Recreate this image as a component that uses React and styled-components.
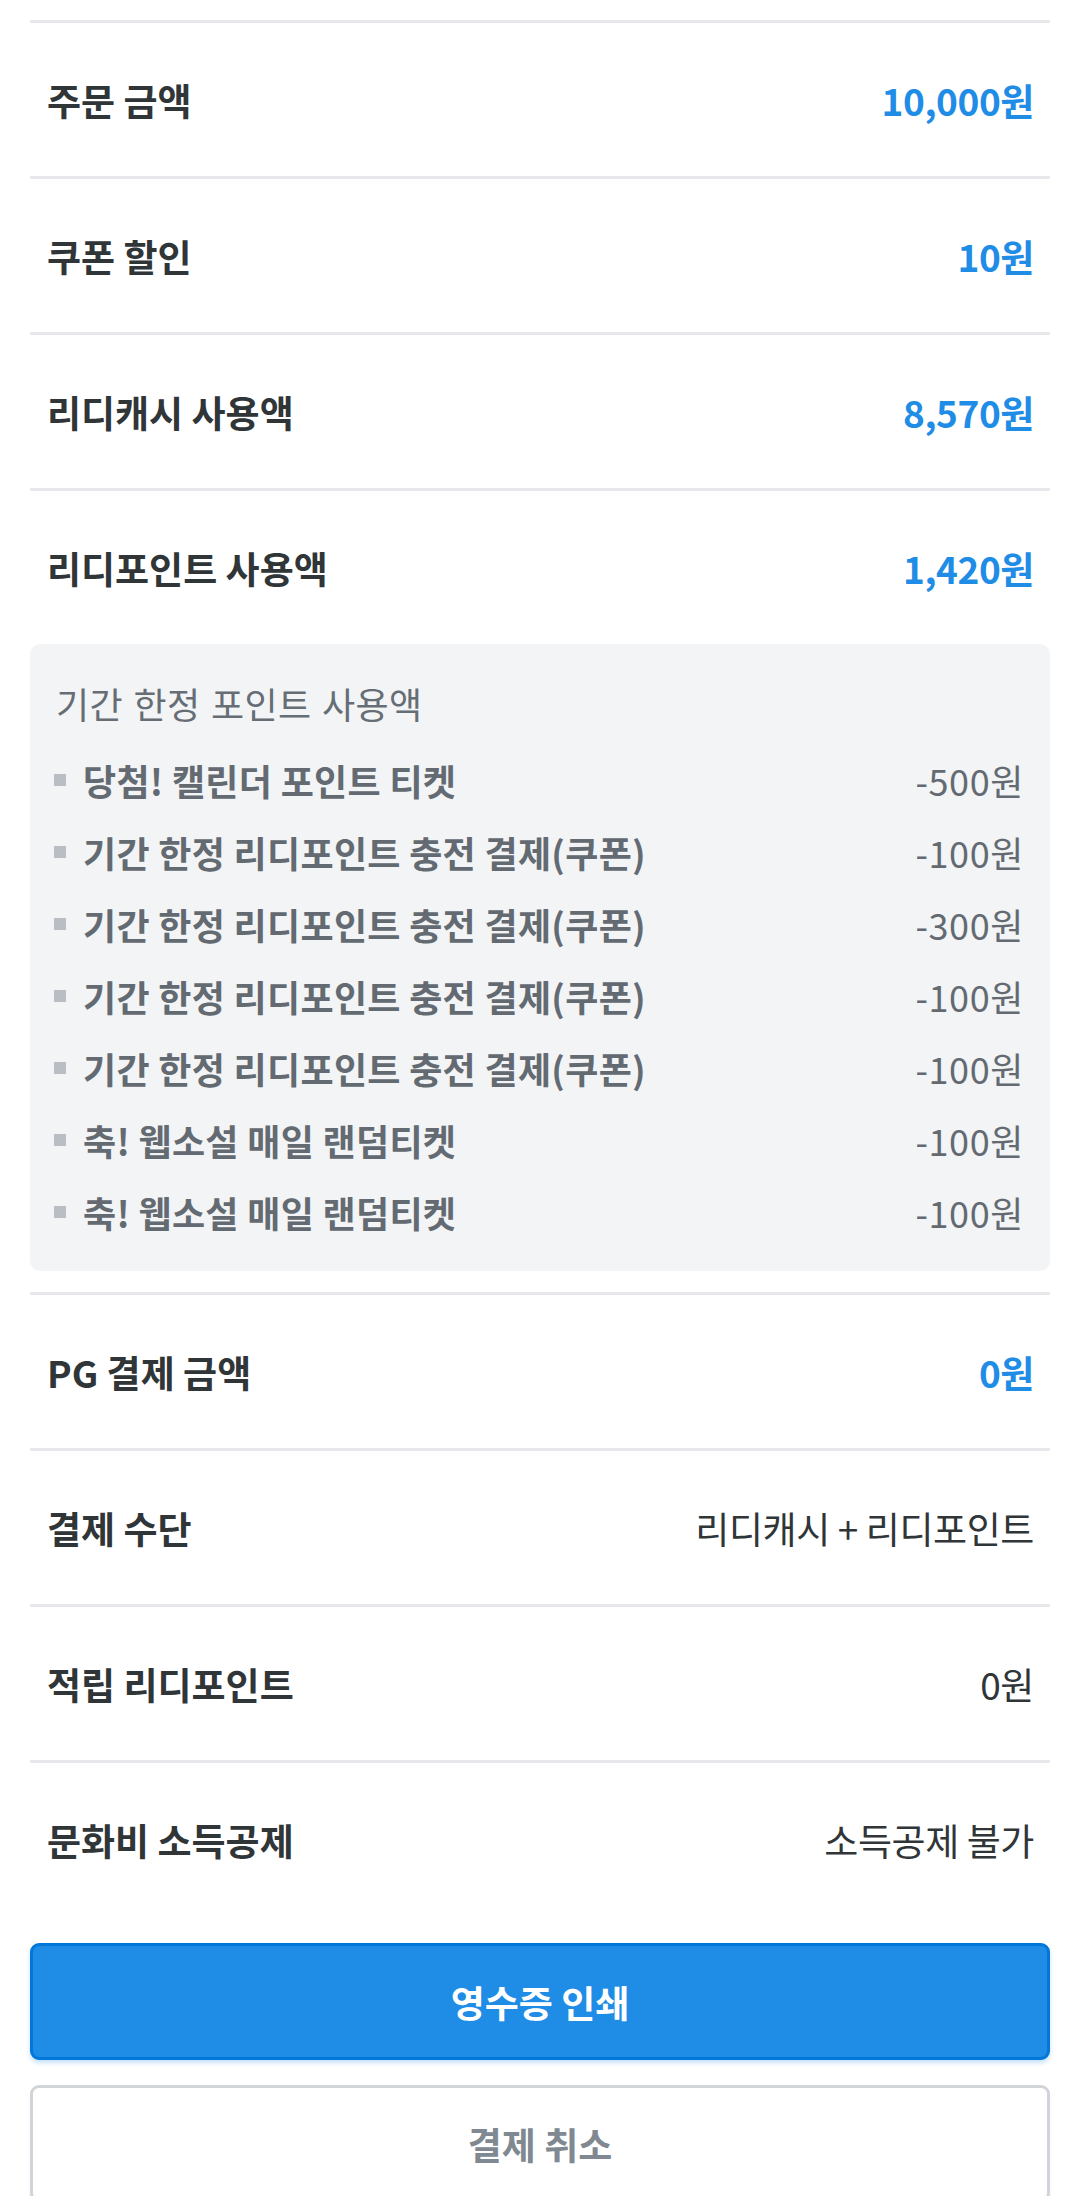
import React from "react";
import styled, { createGlobalStyle } from "styled-components";

const GlobalStyle = createGlobalStyle`
  html, body {
    margin: 0;
    padding: 0;
    background: #ffffff;
  }
  body {
    font-family: "Noto Sans CJK KR", "Noto Sans", sans-serif;
    -webkit-font-smoothing: antialiased;
  }
  * { box-sizing: border-box; }
`;

const Page = styled.div`
  width: 1080px;
  padding: 20px 30px 0;
  overflow: hidden;
  height: 2196px;
`;

const Row = styled.div`
  display: flex;
  align-items: center;
  justify-content: space-between;
  height: 156px;
  padding: 0 16px 0 17px;
  border-top: 3px solid #e6e8eb;
`;

const Label = styled.span`
  font-size: 37px;
  font-weight: 700;
  color: #303538;
  letter-spacing: 0;
`;

const Value = styled.span`
  font-size: 37px;
  font-weight: ${(p) => (p.$accent ? 700 : 400)};
  color: ${(p) => (p.$accent ? "#1f8ce6" : "#303538")};
  letter-spacing: -0.4px;
`;

const PointBox = styled.div`
  background: #f2f4f5;
  border-radius: 10px;
  padding: 24px 26px 23px 24px;
  margin-bottom: 21px;
`;

const BoxTitle = styled.div`
  height: 70px;
  display: flex;
  align-items: center;
  padding-left: 2px;
  font-size: 36px;
  font-weight: 400;
  color: #666d74;
  letter-spacing: 0.4px;
  word-spacing: 2px;
`;

const ItemList = styled.ul`
  list-style: none;
  margin: 6px 0 0;
  padding: 0;
`;

const Item = styled.li`
  display: flex;
  align-items: center;
  height: 72px;
`;

const Bullet = styled.span`
  width: 12px;
  height: 12px;
  background: #b8bec4;
  flex: none;
  margin-right: 17px;
`;

const ItemName = styled.span`
  flex: 1;
  font-size: 36px;
  font-weight: 700;
  color: #636a71;
  letter-spacing: 0.3px;
`;

const ItemAmount = styled.span`
  font-size: 36px;
  font-weight: 400;
  color: #636a71;
  letter-spacing: 0.6px;
`;

const Buttons = styled.div`
  display: flex;
  flex-direction: column;
  gap: 25px;
  margin-top: 27px;
`;

const Button = styled.button`
  width: 100%;
  height: 117px;
  border-radius: 9px;
  font-family: "Noto Sans CJK KR", "Noto Sans", sans-serif;
  font-size: 37px;
  font-weight: 700;
  letter-spacing: 0;
  cursor: pointer;
  border: 3px solid ${(p) => (p.$primary ? "#0077d9" : "#d1d5d9")};
  background: ${(p) => (p.$primary ? "#1f8ce6" : "#ffffff")};
  color: ${(p) => (p.$primary ? "#ffffff" : "#808991")};
  box-shadow: ${(p) => (p.$primary ? "0 3px 4px rgba(31, 140, 230, 0.25)" : "0 2px 3px rgba(0,0,0,0.05)")};
`;

const pointItems = [
  { name: "당첨! 캘린더 포인트 티켓", amount: "-500원" },
  { name: "기간 한정 리디포인트 충전 결제(쿠폰)", amount: "-100원" },
  { name: "기간 한정 리디포인트 충전 결제(쿠폰)", amount: "-300원" },
  { name: "기간 한정 리디포인트 충전 결제(쿠폰)", amount: "-100원" },
  { name: "기간 한정 리디포인트 충전 결제(쿠폰)", amount: "-100원" },
  { name: "축! 웹소설 매일 랜덤티켓", amount: "-100원" },
  { name: "축! 웹소설 매일 랜덤티켓", amount: "-100원" },
];

export default function App() {
  return (
    <>
      <GlobalStyle />
      <Page>
        <Row>
          <Label>주문 금액</Label>
          <Value $accent>10,000원</Value>
        </Row>
        <Row>
          <Label>쿠폰 할인</Label>
          <Value $accent>10원</Value>
        </Row>
        <Row>
          <Label>리디캐시 사용액</Label>
          <Value $accent>8,570원</Value>
        </Row>
        <Row>
          <Label>리디포인트 사용액</Label>
          <Value $accent>1,420원</Value>
        </Row>
        <PointBox>
          <BoxTitle>기간 한정 포인트 사용액</BoxTitle>
          <ItemList>
            {pointItems.map((it, i) => (
              <Item key={i}>
                <Bullet />
                <ItemName>{it.name}</ItemName>
                <ItemAmount>{it.amount}</ItemAmount>
              </Item>
            ))}
          </ItemList>
        </PointBox>
        <Row>
          <Label>PG 결제 금액</Label>
          <Value $accent>0원</Value>
        </Row>
        <Row>
          <Label>결제 수단</Label>
          <Value>리디캐시 + 리디포인트</Value>
        </Row>
        <Row>
          <Label>적립 리디포인트</Label>
          <Value>0원</Value>
        </Row>
        <Row>
          <Label>문화비 소득공제</Label>
          <Value>소득공제 불가</Value>
        </Row>
        <Buttons>
          <Button $primary>영수증 인쇄</Button>
          <Button>결제 취소</Button>
        </Buttons>
      </Page>
    </>
  );
}
